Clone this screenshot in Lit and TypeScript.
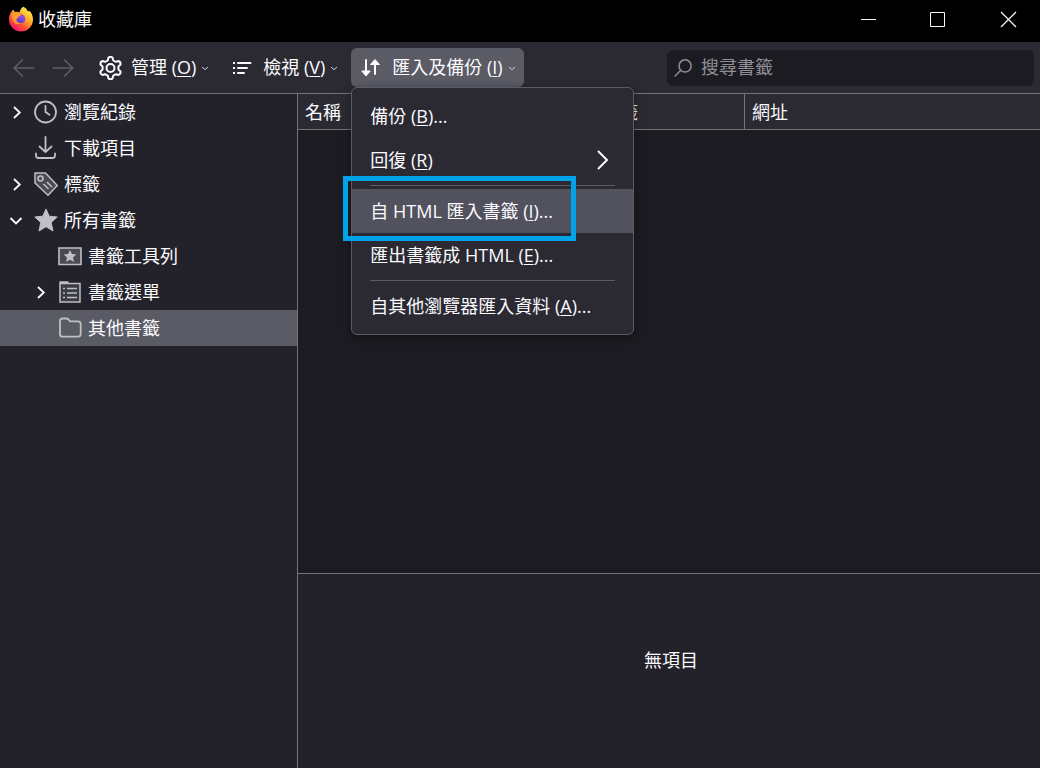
import { LitElement, html, css, svg, nothing } from "lit";
import { customElement, property, state } from "lit/decorators.js";
import { classMap } from "lit/directives/class-map.js";

// Outline of a six-toothed gear with rounded teeth and rounded valleys.
const polar = (r: number, deg: number) => {
  const a = ((deg - 90) * Math.PI) / 180;
  return `${(12 + r * Math.cos(a)).toFixed(2)} ${(12 + r * Math.sin(a)).toFixed(2)}`;
};
const gearPath =
  `M${polar(10.4, -12)}` +
  [0, 60, 120, 180, 240, 300]
    .map((d) => `Q${polar(12.2, d)} ${polar(10.4, d + 12)}L${polar(8.3, d + 18)}Q${polar(7.6, d + 30)} ${polar(8.3, d + 42)}L${polar(10.4, d + 48)}`)
    .join("") +
  "z";

const icons: Record<string, unknown> = {
  back: svg`<path d="M22.500 12H2M11 3.500 2.200 12l8.800 8.500" stroke-width="1.600"/>`,
  forward: svg`<path d="M1.500 12H22M13 3.500l8.800 8.500-8.800 8.500" stroke-width="1.600"/>`,
  gear: svg`<circle cx="12.500" cy="12" r="4" stroke-width="2"/><path transform="translate(.5 0)" stroke-width="2" stroke-linejoin="round" d=${gearPath}/>`,
  list: svg`<path stroke-width="2" d="M3 7h2M3 12h2M3 17h2"/><path stroke-width="2" stroke-linecap="round" d="M8 7h12.500M8 12h9M8 17h6"/>`,
  transfer: svg`<path stroke-width="2" stroke-linecap="round" d="M7 4v14M16 7v11"/><path fill="currentColor" stroke-linejoin="round" d="M2.800 15h8.400L7 20zM11.500 8.500h9L16 3.500z"/>`,
  clock: svg`<circle cx="11.500" cy="12" r="10.500" stroke-width="1.800"/><path stroke-width="1.800" stroke-linecap="round" d="M11.500 6v6l4 2.700"/>`,
  download: svg`<path stroke-width="1.800" stroke-linecap="round" stroke-linejoin="round" d="M11.500 1v15M5.500 10.500 11.500 16l6-5.500M2 17.500v2q0 2.500 2.500 2.500h14q2.500 0 2.500-2.500v-2"/>`,
  tag: svg`<path fill="#4a4a52" stroke-width="1.500" stroke-linejoin="round" d="M1 1h10.500L23.300 13.500 14 23.300 1 11z"/><circle cx="6.500" cy="6.500" r="2.500" stroke-width="1.600"/><path stroke-width="1.500" d="m9.500 12 5 5M13 10l5 5"/>`,
  star: svg`<path fill="currentColor" stroke-linejoin="round" d="m12 1 3.200 7.200 8 .8-6 5.500 1.800 8.500-7-4.300L5 23l1.800-8.500-6-5.500 8-.8z"/>`,
  toolbar: svg`<path fill="#4a4a52" stroke-width="1.600" d="M1 4h22v16.500H1z"/><path fill="currentColor" stroke="none" d="m12 6 1.900 4 4.400.5-3.300 3 .9 4.500-3.900-2.300L8.100 18l.9-4.500-3.300-3 4.400-.5z"/>`,
  menu: svg`<path fill="#3b3b43" stroke-width="1.500" d="M2 3.500h20V22H2z"/><path stroke-width="2.500" d="M1.500 2.500h9"/><path stroke-width="1.700" d="M5 8.500h2M5 13h2M5 17.500h2M9 8.500h10M9 13h10M9 17.500h10"/>`,
  folder: svg`<path stroke-width="1.800" stroke-linejoin="round" d="M4.500 2.500h4q1 0 2 1l1.500 1.800h8q2.700 0 2.700 2.700v10q0 2.700-2.700 2.700H4.500Q2 20.700 2 18V5q0-2.500 2.500-2.500z"/>`,
  search: svg`<circle cx="14.500" cy="9.500" r="7.300" stroke-width="1.800"/><path stroke-width="1.800" stroke-linecap="round" d="m9 15-6.500 6.500"/>`,
  chevronRight: svg`<path stroke-width="1.800" d="m9 7 5.800 5.500L9 18"/>`,
  chevronDown: svg`<path stroke-width="1.800" d="m5.500 10 5.500 5.500 5.500-5.500"/>`,
  submenu: svg`<path stroke-width="2" d="m7 3 9 9-9 9"/>`,
  caret: svg`<path stroke-width="3" d="m3 9 9 8 9-8"/>`,
  minimize: svg`<path d="M5 12.500h15" stroke-width="1"/>`,
  maximize: svg`<path d="M4.500 5.500h14v14h-14z" stroke-width="1"/>`,
  close: svg`<path d="m5 5 15 15m0-15-15 15" stroke-width="1.200"/>`,
};

@customElement("line-icon")
class LineIcon extends LitElement {
  @property() name = "";
  static styles = css`
    :host { display: block; flex: none; width: 24px; height: 24px; }
    .glyph { display: block; width: 100%; height: 100%; fill: none; stroke: currentColor; }
  `;
  render() {
    return html`<svg class="glyph" viewBox="0 0 24 24" aria-hidden="true">${icons[this.name]}</svg>`;
  }
}

interface TreeEntry { label: string; icon: string; level: number; open?: boolean; }
interface MenuEntry { label: string; key: string; more?: boolean; submenu?: boolean; marked?: boolean; separated?: boolean; }

const entries: TreeEntry[] = [
  { label: "瀏覽紀錄", icon: "clock", level: 0, open: false },
  { label: "下載項目", icon: "download", level: 0 },
  { label: "標籤", icon: "tag", level: 0, open: false },
  { label: "所有書籤", icon: "star", level: 0, open: true },
  { label: "書籤工具列", icon: "toolbar", level: 1 },
  { label: "書籤選單", icon: "menu", level: 1, open: false },
  { label: "其他書籤", icon: "folder", level: 1 },
];

const menuEntries: MenuEntry[] = [
  { label: "備份", key: "B", more: true },
  { label: "回復", key: "R", submenu: true },
  { label: "自 HTML 匯入書籤", key: "I", more: true, marked: true, separated: true },
  { label: "匯出書籤成 HTML", key: "E", more: true },
  { label: "自其他瀏覽器匯入資料", key: "A", more: true, separated: true },
];

@customElement("app-root")
class AppRoot extends LitElement {
  @state() private selected = 6;
  @state() private menuOpen = true;

  static styles = css`
    :host {
      display: flex; flex-direction: column; height: 100vh; overflow: hidden;
      background: #23222b; color: #fbfbfe;
      font: 18px/24px "Open Sans", "Noto Sans CJK TC", sans-serif;
      --line: #747477;
    }
    *, *::before { box-sizing: border-box; }
    button, input { font: inherit; color: inherit; border: 0; background: none; margin: 0; padding: 0; }
    u { text-decoration-thickness: 1px; text-underline-offset: 2px; }

    .titlebar { flex: none; display: flex; align-items: center; height: 42px; padding: 0 0 4px 8px; background: #000; }
    .logo { width: 26px; height: 26px; margin-right: 4px; }
    .title { flex: 1; margin: 0; font-size: 18px; font-weight: 400; }
    .control { display: flex; justify-content: center; align-items: center; width: 70px; height: 38px; padding-left: 6px; }

    .toolbar { flex: none; display: flex; align-items: center; height: 52px; padding: 0 6px 0 12px; background: #2b2a33; border-bottom: 1px solid var(--line); }
    .nav { display: flex; gap: 15px; margin-right: 15px; color: #5f5e66; }
    .nav button:disabled { color: inherit; }
    .menus { display: flex; gap: 5px; flex: 1; }
    .anchor { position: relative; }
    .tool { display: flex; align-items: center; height: 39px; padding: 0 8px; border-radius: 6px; white-space: nowrap; }
    .tool.active { background: #5b5b66; }
    .tool-label { margin: 0 5px 0 9px; padding-bottom: 2px; }
    .caret { width: 8px; height: 8px; color: #cfcfd8; }
    .search { display: flex; align-items: center; flex: 0 1 367px; height: 36px; padding: 0 6px; border-radius: 6px; background: #1c1b22; color: #8f8f96; }
    .search line-icon { width: 20px; height: 20px; }
    .search input { flex: 1; min-width: 0; height: 36px; margin-left: 8px; padding-bottom: 2px; outline: none; color: #fbfbfe; }
    .search input::placeholder { color: #8f8f96; opacity: 1; }

    .menu { position: absolute; z-index: 2; top: 39px; left: 0; min-width: 283px; padding: 6px 0; border: 1px solid #5b5b66; border-radius: 6px; background: #2b2a33; box-shadow: 0 2px 8px rgb(0 0 0 / 40%); }
    .menu hr { height: 1px; margin: 3px 18px; border: 0; background: #5b5b66; }
    .item { position: relative; display: flex; justify-content: space-between; align-items: center; width: 100%; height: 44px; padding: 0 18px; text-align: left; white-space: nowrap; }
    .item.marked { background: #52525e; z-index: 1; }
    .frame { position: absolute; inset: -13px 57px -8px -9px; border: 5px solid #00a2e8; pointer-events: none; }

    .body { flex: 1; min-height: 0; display: flex; }
    .tree { flex: none; width: 298px; margin: 0; padding: 0; list-style: none; border-right: 1px solid var(--line); }
    .row { display: flex; align-items: center; width: 100%; height: 36px; padding-left: 5px; text-align: left; }
    .row.nested { padding-left: 29px; }
    .row.selected { background: #5b5b66; }
    .twisty { width: 24px; height: 24px; margin-right: 5px; }
    .row-icon { color: #bfbfc6; margin-right: 6px; }
    .main { flex: 1; min-width: 0; display: flex; flex-direction: column; }
    .list { flex: 1; background: #1c1b22; }
    .table { width: 100%; table-layout: fixed; border-collapse: separate; border-spacing: 0; background: #2b2a33; }
    .table th { height: 36px; padding: 0 7px; font-weight: 400; text-align: left; border-bottom: 1px solid var(--line); }
    .table th + th { border-left: 1px solid var(--line); }
    .name { width: 296px; }
    .tags { width: 150px; }
    .details { flex: none; display: flex; justify-content: center; height: 195px; padding: 74px 0 0 4px; border-top: 1px solid var(--line); }
    .details p { margin: 0; }
  `;

  private logo() {
    return html`<svg class="logo" viewBox="0 0 26 26" role="img" aria-label="Firefox">
      <defs>
        <linearGradient id="flame" x1=".85" y1=".1" x2=".25" y2=".95">
          <stop offset="0" stop-color="#fff14a"/><stop offset=".4" stop-color="#ffa52a"/>
          <stop offset=".7" stop-color="#ff5038"/><stop offset="1" stop-color="#f4126b"/>
        </linearGradient>
        <linearGradient id="globe" x1=".7" y1="0" x2=".3" y2="1">
          <stop offset="0" stop-color="#a64cf0"/><stop offset="1" stop-color="#5140c8"/>
        </linearGradient>
      </defs>
      <path fill="url(#flame)" d="M15.500.8c2 1 3.800 3 4.500 4.800l1.300-.8c2.500 2.300 3.700 5.200 3.700 8.700A12 12 0 0 1 1 13.500c0-3.500 1-6.500 3-8.500l1-1.500 2 2.500q2.500-.5 4.500.5c.5-2.500 2-5 4-5.700z"/>
      <path fill="#8a3fb0" d="M9 8.500q3.500-1.500 6 .5c2 1.700 2.500 3.500 2 5.500-1 2.700-5 3.500-7.500 2-2.500-2-2.500-5-.5-8z"/>
      <circle cx="12.800" cy="13" r="3.800" fill="url(#globe)"/>
      <path fill="#ff9a2b" d="M3.500 9C5 6 8.500 5.500 10.500 7.500l3 .8c-.3 1.500-2.300 1.700-3 2.400-1 1-.8 2-2.200 2.600 0 2.500 2 4.200 4.700 4-3.500 2.700-9.500-.3-9.500-8.300z"/>
    </svg>`;
  }

  private tool(icon: string, label: string, key: string, active = false) {
    return html`<button class=${classMap({ tool: true, active })} aria-haspopup="menu" aria-expanded=${active}
      @click=${() => { if (icon === "transfer") this.menuOpen = !this.menuOpen; }}>
      <line-icon name=${icon}></line-icon><span class="tool-label">${label} (<u>${key}</u>)</span><line-icon class="caret" name="caret"></line-icon>
    </button>`;
  }

  private menu() {
    return html`<div class="menu" role="menu">
      ${menuEntries.map((m) => html`
        ${m.separated ? html`<hr>` : nothing}
        <button class=${classMap({ item: true, marked: !!m.marked })} role="menuitem">
          <span>${m.label} (<u>${m.key}</u>)${m.more ? "..." : ""}</span>
          ${m.submenu ? html`<line-icon name="submenu"></line-icon>` : nothing}
          ${m.marked ? html`<span class="frame"></span>` : nothing}
        </button>`)}
    </div>`;
  }

  render() {
    return html`
      <header class="titlebar">
        ${this.logo()}
        <h1 class="title">收藏庫</h1>
        <button class="control" aria-label="最小化"><line-icon name="minimize"></line-icon></button>
        <button class="control" aria-label="最大化"><line-icon name="maximize"></line-icon></button>
        <button class="control" aria-label="關閉"><line-icon name="close"></line-icon></button>
      </header>
      <div class="toolbar">
        <div class="nav">
          <button disabled aria-label="上一頁"><line-icon name="back"></line-icon></button>
          <button disabled aria-label="下一頁"><line-icon name="forward"></line-icon></button>
        </div>
        <div class="menus">
          ${this.tool("gear", "管理", "O")}
          ${this.tool("list", "檢視", "V")}
          <div class="anchor">
            ${this.tool("transfer", "匯入及備份", "I", this.menuOpen)}
            ${this.menuOpen ? this.menu() : nothing}
          </div>
        </div>
        <label class="search"><line-icon name="search"></line-icon><input type="text" placeholder="搜尋書籤" aria-label="搜尋書籤"></label>
      </div>
      <div class="body">
        <ul class="tree">
          ${entries.map((e, i) => html`<li>
            <button class=${classMap({ row: true, nested: e.level > 0, selected: i === this.selected })} @click=${() => { this.selected = i; }}>
              <span class="twisty">${e.open === undefined ? nothing : html`<line-icon name=${e.open ? "chevronDown" : "chevronRight"}></line-icon>`}</span>
              <line-icon class="row-icon" name=${e.icon}></line-icon>
              <span>${e.label}</span>
            </button>
          </li>`)}
        </ul>
        <main class="main">
          <div class="list">
            <table class="table">
              <thead><tr><th class="name" scope="col">名稱</th><th class="tags" scope="col">標籤</th><th scope="col">網址</th></tr></thead>
              <tbody></tbody>
            </table>
          </div>
          <section class="details"><p>無項目</p></section>
        </main>
      </div>`;
  }
}
